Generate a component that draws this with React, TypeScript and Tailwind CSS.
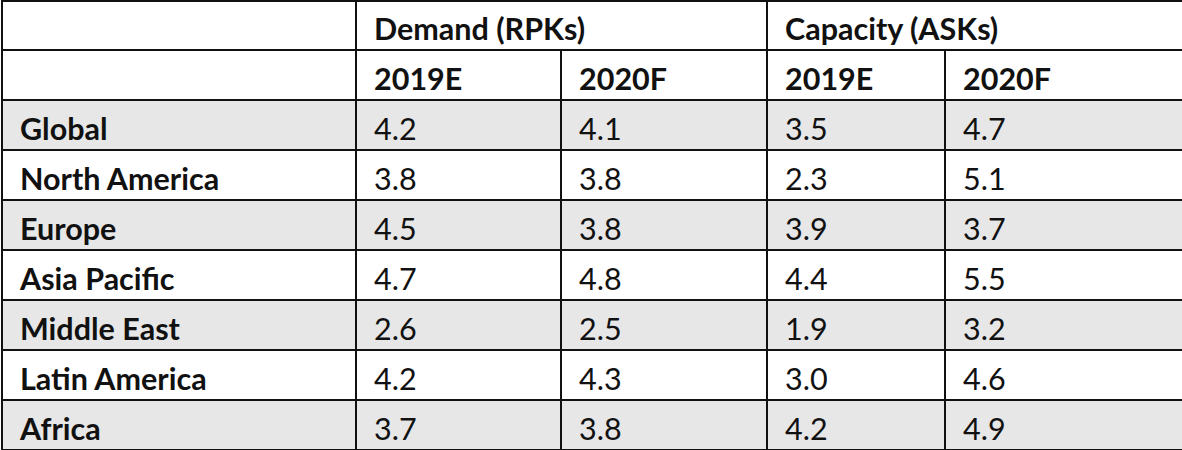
const rows: [string, string, string, string, string][] = [
  ['Global', '4.2', '4.1', '3.5', '4.7'],
  ['North America', '3.8', '3.8', '2.3', '5.1'],
  ['Europe', '4.5', '3.8', '3.9', '3.7'],
  ['Asia Pacific', '4.7', '4.8', '4.4', '5.5'],
  ['Middle East', '2.6', '2.5', '1.9', '3.2'],
  ['Latin America', '4.2', '4.3', '3.0', '4.6'],
  ['Africa', '3.7', '3.8', '4.2', '4.9'],
];

const cell = 'border-2 border-[#111] pl-[17px] pt-[6px] align-middle whitespace-nowrap';

export default function App() {
  return (
    <div
      className="w-[1182px] h-[450px] overflow-hidden bg-white pl-[1px] text-[#111]"
      style={{ fontFamily: 'Lato, "Open Sans", sans-serif' }}
    >
      <table className="table-fixed border-collapse w-[1260px] text-[30.5px] leading-none">
        <colgroup>
          <col className="w-[354px]" />
          <col className="w-[205px]" />
          <col className="w-[206px]" />
          <col className="w-[178px]" />
          <col />
        </colgroup>
        <thead>
          <tr className="h-[49px] font-bold">
            <th className={cell}></th>
            <th colSpan={2} className={`${cell} text-left`}>
              Demand (RPKs)
            </th>
            <th colSpan={2} className={`${cell} text-left`}>
              Capacity (ASKs)
            </th>
          </tr>
          <tr className="h-[50px] font-bold">
            <th className={cell}></th>
            <th className={`${cell} text-left`}>2019E</th>
            <th className={`${cell} text-left`}>2020F</th>
            <th className={`${cell} text-left`}>2019E</th>
            <th className={`${cell} text-left`}>2020F</th>
          </tr>
        </thead>
        <tbody>
          {rows.map((r, i) => (
            <tr key={r[0]} className={`h-[50px] ${i % 2 === 0 ? 'bg-[#e7e7e7]' : 'bg-white'}`}>
              <td className={`${cell} font-bold`}>{r[0]}</td>
              <td className={cell}>{r[1]}</td>
              <td className={cell}>{r[2]}</td>
              <td className={cell}>{r[3]}</td>
              <td className={cell}>{r[4]}</td>
            </tr>
          ))}
        </tbody>
      </table>
    </div>
  );
}
